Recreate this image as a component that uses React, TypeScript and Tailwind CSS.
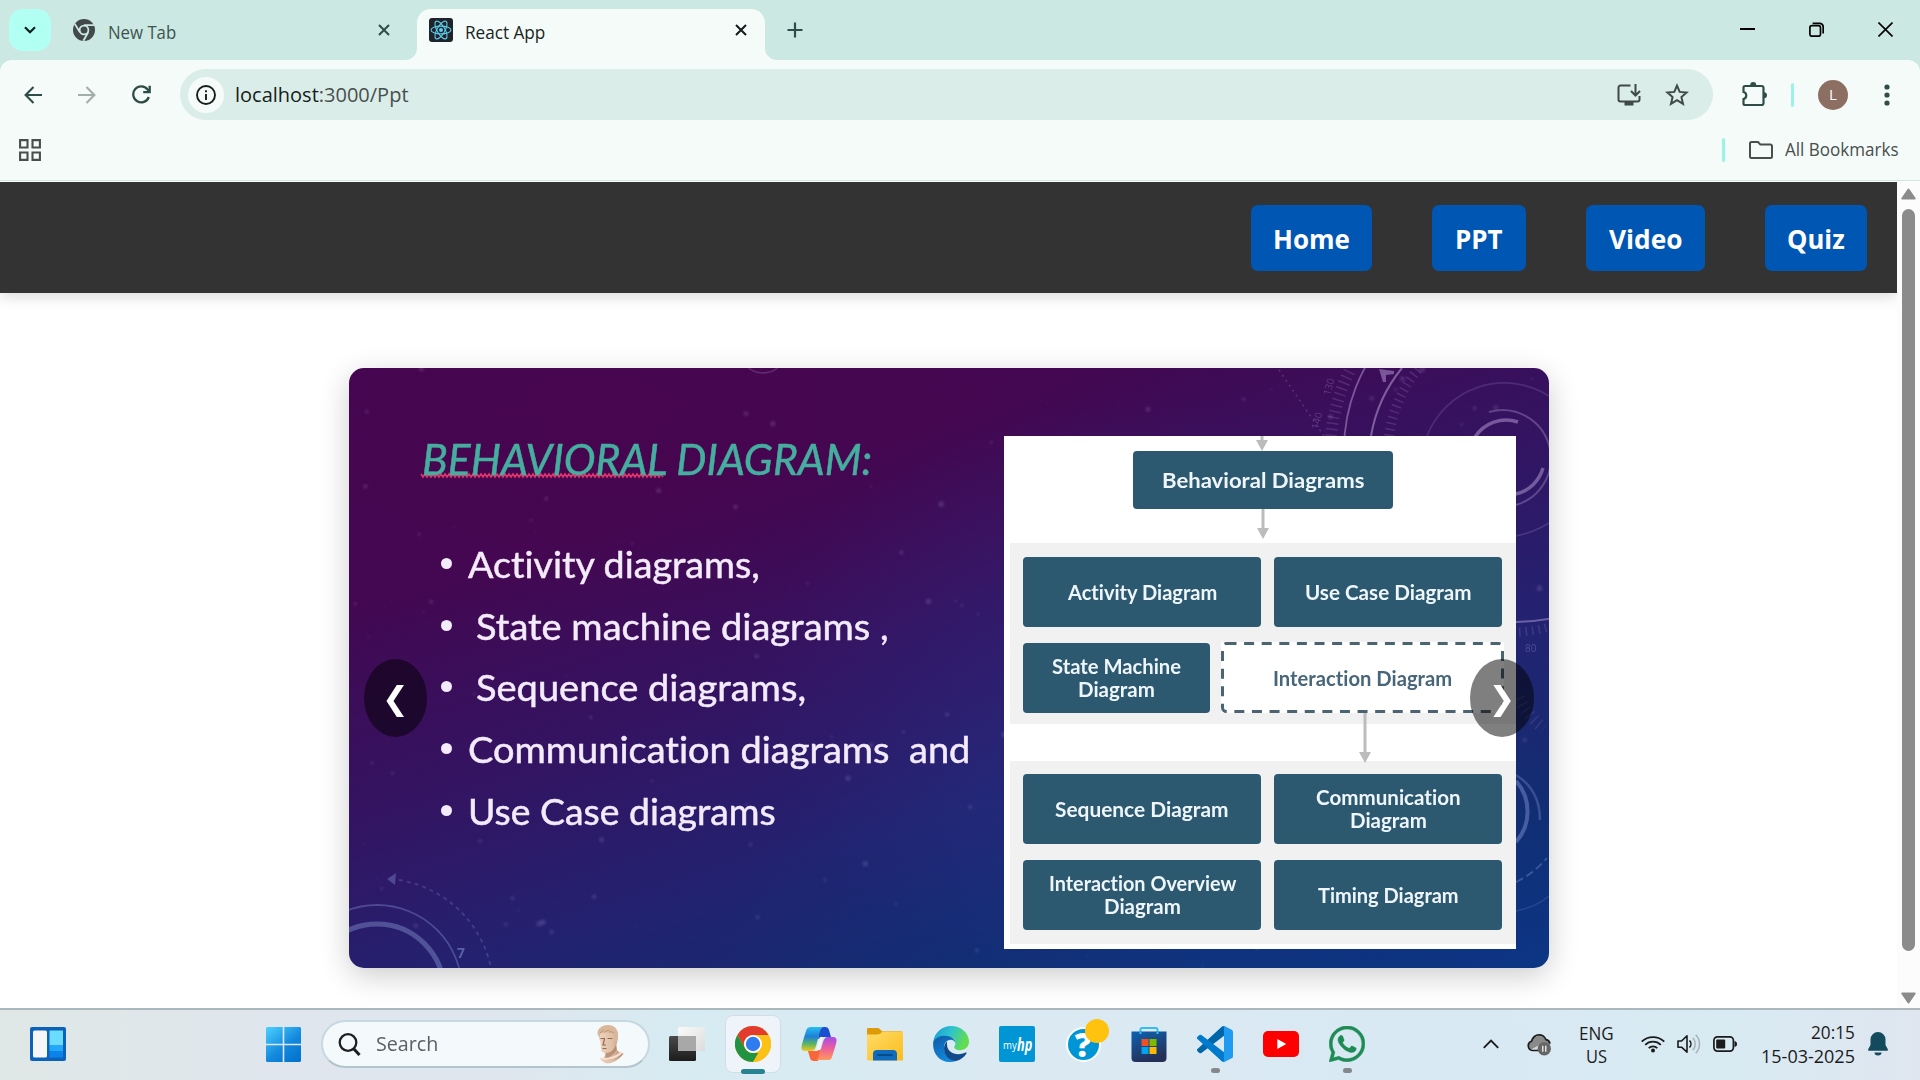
import { useLayoutEffect, useRef, useState } from "react";
import type { ReactNode } from "react";

/** Text condensed or widened to a fixed measure. */
function Fit({ w, className = "", children }: { w: number; className?: string; children: ReactNode }) {
  const ref = useRef<HTMLSpanElement>(null);
  const [scale, setScale] = useState(1);
  useLayoutEffect(() => {
    if (ref.current) setScale(w / ref.current.offsetWidth);
  }, [w]);
  return (
    <span className={`block shrink-0 whitespace-pre leading-none [font-variant-ligatures:none] ${className}`} style={{ width: w }}>
      <span ref={ref} className="inline-block origin-left" style={{ transform: `scaleX(${scale})` }}>
        {children}
      </span>
    </span>
  );
}

const CloseIcon = ({ className }: { className: string }) => (
  <svg className={className} viewBox="0 0 12 12" fill="none" stroke="currentColor" strokeWidth="2">
    <path d="M1 1l10 10M11 1L1 11" />
  </svg>
);

function TabStrip() {
  return (
    <div className="flex h-[60px] bg-[#cce8e2]">
      <div className="ml-[9px] mt-[9px] flex h-[42px] w-[42px] items-center justify-center rounded-[14px] bg-[#b2fff3]">
        <svg className="h-2 w-3" viewBox="0 0 12 8" fill="none" stroke="#0d1f1c" strokeWidth="2.2">
          <path d="M1 1.2l5 5 5-5" />
        </svg>
      </div>
      <div className="ml-[22px] flex w-[318px] items-center">
        <svg className="h-[22px] w-[22px] shrink-0" viewBox="0 0 22 22">
          <circle cx="11" cy="11" r="11" fill="#41494a" />
          <circle cx="11" cy="11" r="4.4" fill="none" stroke="#cce8e2" strokeWidth="1.8" />
          <path d="M11 6.2h10M6.9 13.2L1.8 4.9M15.2 13.2l-4.8 8.6" stroke="#cce8e2" strokeWidth="1.8" />
        </svg>
        <Fit w={68} className="ml-[13px] pt-[3px] font-['Open_Sans'] text-[18px] text-[#3c5450]">New Tab</Fit>
        <CloseIcon className="ml-[202px] h-3 w-3 shrink-0 text-[#2f4d48]" />
      </div>
      <div className="relative ml-[26px] mt-[9px] flex h-[51px] w-[348px] items-center rounded-t-[14px] bg-[#f5fbf9] pb-[9px]">
        <svg className="absolute -left-3 bottom-0 h-3 w-3" viewBox="0 0 12 12"><path d="M12 0v12H0A12 12 0 0 0 12 0" fill="#f5fbf9" /></svg>
        <svg className="absolute -right-3 bottom-0 h-3 w-3" viewBox="0 0 12 12"><path d="M0 0v12h12A12 12 0 0 1 0 0" fill="#f5fbf9" /></svg>
        <svg className="ml-3 h-6 w-6 shrink-0" viewBox="0 0 24 24" fill="none" stroke="#5ccfee" strokeWidth="1.1">
          <rect width="24" height="24" rx="3" fill="#20232a" stroke="none" />
          <ellipse cx="12" cy="12" rx="10" ry="3.9" />
          <ellipse cx="12" cy="12" rx="10" ry="3.9" transform="rotate(60 12 12)" />
          <ellipse cx="12" cy="12" rx="10" ry="3.9" transform="rotate(120 12 12)" />
          <circle cx="12" cy="12" r="2" fill="#5ccfee" stroke="none" />
        </svg>
        <Fit w={80} className="ml-3 pt-[3px] font-['Open_Sans'] text-[18px] text-[#182623]">React App</Fit>
        <CloseIcon className="ml-[190px] h-3 w-3 shrink-0 text-[#111c1a]" />
      </div>
      <svg className="ml-[22px] mt-[22px] h-4 w-4" viewBox="0 0 16 16" stroke="#2f4d48" strokeWidth="2.2">
        <path d="M8 .5v15M.5 8h15" />
      </svg>
      <div className="ml-auto mr-[27px] flex h-[59px] items-center gap-[54px]">
        <svg className="h-[15px] w-[15px]" viewBox="0 0 15 15"><path d="M0 7h15" stroke="#000" strokeWidth="2" /></svg>
        <svg className="h-[15px] w-[15px]" viewBox="0 0 15 15" fill="none" stroke="#000" strokeWidth="1.7">
          <rect x=".9" y="3.6" width="10.6" height="10.6" rx="2" />
          <path d="M3.6 1.3h7A3.6 3.6 0 0 1 14.2 5v6.6" />
        </svg>
        <svg className="h-[15px] w-[15px]" viewBox="0 0 15 15"><path d="M.5.5l14 14M14.500.5L.5 14.500" stroke="#000" strokeWidth="1.6" /></svg>
      </div>
    </div>
  );
}

function Toolbar() {
  return (
    <div className="bg-[#cce8e2]">
      <div className="h-[121px] rounded-t-xl border-b border-[#d3e4df] bg-[#f5fbf9]">
        <div className="flex h-[69px] items-center">
          <svg className="ml-6 h-[18px] w-[18px]" viewBox="0 0 18 18" fill="none" stroke="#2f4d48" strokeWidth="2.1"><path d="M9.500 1L1.600 9l7.900 8M1.600 9H18" /></svg>
          <svg className="ml-9 h-[18px] w-[18px]" viewBox="0 0 18 18" fill="none" stroke="#a3aeab" strokeWidth="2.1"><path d="M8.500 1l7.900 8-7.900 8M16.400 9H0" /></svg>
          <svg className="ml-9 h-[19px] w-[19px]" viewBox="0 0 19 19" fill="none" stroke="#2f4d48" strokeWidth="2.3">
            <path d="M16.800 12A8 8 0 1 1 15.600 4.500L17 6.300" /><path d="M17.700.8v6.400h-6.500" />
          </svg>
          <div className="ml-[29px] flex h-[51px] w-[1533px] items-center rounded-full bg-[#dbede8]">
            <div className="ml-2 flex h-9 w-9 items-center justify-center rounded-full bg-[#f5fbf9]">
              <svg className="h-5 w-5" viewBox="0 0 20 20" fill="none" stroke="#171d1b" strokeWidth="1.9">
                <circle cx="10" cy="10" r="9" /><path d="M10 9v6M10 5.200v2" />
              </svg>
            </div>
            <Fit w={174} className="ml-[11px] font-['Open_Sans'] text-[20px] text-[#474f4d]">
              <span className="text-[#171d1b]">localhost</span>:3000/Ppt
            </Fit>
            <svg className="ml-auto h-6 w-6" viewBox="0 0 24 24" fill="none" stroke="#3f4947" strokeWidth="2">
              <path d="M13.500 2.500H3.500a2 2 0 0 0-2 2v12a2 2 0 0 0 2 2h17a2 2 0 0 0 2-2V13" />
              <path d="M18.500 1v11M14 8l4.500 4.500L23 8" />
              <path d="M7.500 19h9v3.500h-9z" fill="#3f4947" stroke="none" />
            </svg>
            <svg className="ml-6 mr-[24px] h-6 w-6" viewBox="0 0 24 24" fill="none" stroke="#3f4947" strokeWidth="2">
              <path d="M12 2.600l2.700 6.300 6.900.6-5.200 4.500 1.600 6.900-6-3.700-6 3.700 1.600-6.900L2.400 9.500l6.900-.6z" />
            </svg>
          </div>
          <svg className="ml-[28px] h-[26px] w-[26px]" viewBox="0 0 26 26" fill="none" stroke="#2f4d48" strokeWidth="2.200">
            <path d="M4 4h16.500a2 2 0 0 1 2 2v15a2 2 0 0 1-2 2H4a1.500 1.500 0 0 1-1.500-1.500V17a3.600 3.600 0 0 0 0-7V5.500A1.500 1.500 0 0 1 4 4z" />
            <path d="M9.200 3a3 3 0 0 1 6 0zM23 10.200a3 3 0 0 1 0 6z" fill="#2f4d48" stroke="none" />
          </svg>
          <div className="ml-[24px] h-6 w-[3px] rounded bg-[#9bf3e5]" />
          <div className="ml-[24px] flex h-[30px] w-[30px] items-center justify-center rounded-full bg-[#8d6e63] font-['Open_Sans'] text-[15px] leading-none text-white">L</div>
          <svg className="ml-[36px] h-[22px] w-[6px]" viewBox="0 0 6 22" fill="#2f4d48">
            <circle cx="3" cy="3" r="2.600" /><circle cx="3" cy="11" r="2.600" /><circle cx="3" cy="19" r="2.600" />
          </svg>
        </div>
        <div className="mt-[9px] flex h-6 items-center">
          <svg className="ml-[19px] h-[22px] w-[22px]" viewBox="0 0 22 22" fill="none" stroke="#474f4d" strokeWidth="2.100">
            <path d="M1.100 1.100h7.400v7.400H1.100zM13.500 1.100h7.400v7.400h-7.400zM1.100 13.500h7.400v7.400H1.100zM13.500 13.500h7.400v7.400h-7.400z" />
          </svg>
          <div className="ml-auto h-6 w-[3px] rounded bg-[#9bf3e5]" />
          <svg className="ml-[24px] h-[18px] w-6" viewBox="0 0 24 18" fill="none" stroke="#474f4d" strokeWidth="2">
            <path d="M1 2.500A1.500 1.500 0 0 1 2.500 1H9l2.400 2.600h10A1.500 1.500 0 0 1 23 5v10.500a1.500 1.500 0 0 1-1.500 1.500h-19A1.500 1.500 0 0 1 1 15.500z" />
          </svg>
          <Fit w={114} className="ml-3 mr-[21px] font-['Open_Sans'] text-[17.500px] text-[#474f4d]">All Bookmarks</Fit>
        </div>
      </div>
    </div>
  );
}

const NAV = [
  { label: "Home", w: 77, box: "w-[121px]" },
  { label: "PPT", w: 48, box: "w-[94px]" },
  { label: "Video", w: 74, box: "w-[119px]" },
  { label: "Quiz", w: 58, box: "w-[102px]" },
];

const STARS = Array.from({ length: 150 }, (_, i) => {
  const a = Math.sin(i * 127.1 + 3.7) * 43758.5453;
  const b = Math.sin(i * 311.7 + 1.3) * 24634.6345;
  const c = Math.sin(i * 71.9 + 9.1) * 9631.17;
  return { x: (a - Math.floor(a)) * 1200, y: (b - Math.floor(b)) * 600, t: c - Math.floor(c) };
});

function SlideBackdrop() {
  return (
    <svg className="absolute inset-0 h-[600px] w-[1200px]" viewBox="0 0 1200 600" fill="none">
      <g fill="#b9a3e6" className="blur-[0.8px]">
        {STARS.map((s, i) => (
          <circle key={i} cx={s.x} cy={s.y} r={1 + s.t * 2} opacity={0.06 + s.t * 0.13} />
        ))}
      </g>
      <g stroke="#b79fd6" className="blur-[0.4px]">
        <circle cx="414" cy="-18" r="23" opacity=".25" strokeWidth="1.500" />
        <circle cx="1167" cy="82" r="172" opacity=".5" strokeWidth="1.800" />
        <path d="M1022 68A146 146 0 0 1 1053 0" opacity=".55" strokeWidth="2" />
        <path d="M1040 68A130 130 0 0 1 1070 0" opacity=".2" strokeWidth="10" strokeDasharray="1.500 4.500" />
        <path d="M982 68A186 186 0 0 1 1002 0" opacity=".2" strokeWidth="12" strokeDasharray="1.500 4.500" />
        <path d="M930 2l45 66" opacity=".25" strokeWidth="1.500" strokeDasharray="2 4" />
        <path d="M1078 68A83 83 0 0 1 1200 28" opacity=".18" strokeWidth="1.800" />
        <path d="M1140 44A48 48 0 0 1 1167 137" opacity=".35" strokeWidth="2" />
        <path d="M1126 69A37 37 0 0 1 1169 54" opacity=".5" strokeWidth="3.500" />
        <path d="M1194 100A37 37 0 0 1 1167 126" opacity=".5" strokeWidth="3.500" />
        <path d="M1167 168Q1186 164 1200 155" opacity=".2" strokeWidth="1.500" />
        <path d="M1170 264Q1186 263 1200 259" opacity=".18" strokeWidth="9" strokeDasharray="1.500 5" />
        <path d="M1170 330Q1180 350 1195 360" opacity=".15" strokeWidth="12" strokeDasharray="1.500 5" />
      </g>
      <path d="M1030 1l15 2v3l-8 1 0 7-3 0z" fill="#b79fd6" opacity=".5" />
      <g fill="#b79fd6" opacity=".3" className="font-['Open_Sans'] text-[10px]">
        <text transform="translate(981 28) rotate(-75)">130</text>
        <text transform="translate(969 62) rotate(-75)">140</text>
        <text x="1176" y="284">80</text>
      </g>
      <g stroke="#8fa0dd" className="blur-[0.4px]">
        <path d="M1167 413A46 46 0 0 1 1167 474" opacity=".42" strokeWidth="4" />
        <path d="M1167 407Q1191 422 1191 452" opacity=".3" strokeWidth="2.500" />
        <path d="M1167 514Q1184 506 1198 490" opacity=".35" strokeWidth="1.800" strokeDasharray="8 4" />
        <path d="M1167 543Q1187 539 1200 528" opacity=".2" strokeWidth="1.500" />
        <circle cx="28" cy="623" r="67" opacity=".4" strokeWidth="5" />
        <circle cx="28" cy="622" r="85" opacity=".35" strokeWidth="1.800" />
        <path d="M50 512A112 112 0 0 1 142 600" opacity=".25" strokeWidth="1.800" strokeDasharray="4 4" />
      </g>
      <path d="M38 511l9-6-1 12z" fill="#8fa0dd" opacity=".35" />
      <text x="108" y="590" fill="#8fa0dd" opacity=".5" className="font-['Open_Sans'] text-[14px] font-bold">7</text>
      <path
        d={"M72 106" + Array.from({ length: 121 }, (_, i) => (i % 2 ? "l2 -3" : "l2 3")).join("")}
        stroke="#e0356c" strokeWidth="1.600"
      />
    </svg>
  );
}

const BULLETS = [
  { text: "Activity diagrams,", w: 292, inset: false },
  { text: "State machine diagrams ,", w: 413, inset: true },
  { text: "Sequence diagrams,", w: 330, inset: true },
  { text: "Communication diagrams  and", w: 502, inset: false },
  { text: "Use Case diagrams", w: 308, inset: false },
];

function Box({ lines, className = "" }: { lines: [string, number][]; className?: string }) {
  return (
    <div className={`flex flex-col items-center justify-center gap-[2px] rounded-[4px] bg-[#2c5970] pb-[2px] font-['Lato'] text-[21px] font-bold text-[#eff6fa] ${className}`}>
      {lines.map(([t, w]) => <Fit key={t} w={w}>{t}</Fit>)}
    </div>
  );
}

function Arrow({ h }: { h: number }) {
  return (
    <svg className="block w-3" style={{ height: h }} viewBox={`0 0 12 ${h}`} fill="#bcbcbc">
      <path d={`M4.500 0h3v${h - 11}H12L6 ${h}L0 ${h - 11}h4.500z`} />
    </svg>
  );
}

function Diagram() {
  return (
    <div className="mt-[68px] flex h-[513px] w-[512px] flex-col bg-white">
      <div className="ml-[252px]"><Arrow h={15} /></div>
      <Box className="ml-[129px] h-[58px] w-[260px]" lines={[["Behavioral Diagrams", 202]]} />
      <div className="ml-[253px]"><Arrow h={30} /></div>
      <div className="ml-[6px] mt-[4px] h-[181px] bg-[#f1f1f1] pl-[13px] pt-[14px]">
        <div className="flex gap-[13px]">
          <Box className="h-[70px] w-[238px]" lines={[["Activity Diagram", 149]]} />
          <Box className="h-[70px] w-[228px]" lines={[["Use Case Diagram", 167]]} />
        </div>
        <div className="mt-4 flex gap-[11px]">
          <Box className="h-[70px] w-[187px]" lines={[["State Machine", 129], ["Diagram", 77]]} />
          <div className="relative -mt-px flex h-[71px] w-[283px] items-center justify-center bg-white pb-px font-['Lato'] text-[21px] font-bold text-[#47667a]">
            <svg className="absolute inset-0 h-full w-full" viewBox="0 0 283 71" fill="none">
              <rect x="1.500" y="1.500" width="280" height="68" rx="4" stroke="#4a6472" strokeWidth="3" strokeDasharray="10 7.600" />
            </svg>
            <Fit w={179}>Interaction Diagram</Fit>
          </div>
        </div>
      </div>
      <div className="relative h-[37px]">
        <div className="absolute -top-[11px] left-[355px]"><Arrow h={50} /></div>
      </div>
      <div className="ml-[6px] h-[183px] bg-[#f1f1f1] pl-[13px] pt-[13px]">
        <div className="flex gap-[13px]">
          <Box className="h-[70px] w-[238px]" lines={[["Sequence Diagram", 174]]} />
          <Box className="h-[70px] w-[228px]" lines={[["Communication", 145], ["Diagram", 77]]} />
        </div>
        <div className="mt-4 flex gap-[13px]">
          <Box className="h-[70px] w-[238px]" lines={[["Interaction Overview", 187], ["Diagram", 77]]} />
          <Box className="h-[70px] w-[228px]" lines={[["Timing Diagram", 141]]} />
        </div>
      </div>
    </div>
  );
}

function Slide() {
  return (
    <div className="relative flex h-[600px] w-[1200px] overflow-hidden rounded-[15px] bg-[radial-gradient(ellipse_420px_300px_at_68%_55%,#31308a66,transparent),radial-gradient(ellipse_500px_300px_at_72%_100%,#0b3a8a66,transparent),radial-gradient(ellipse_600px_240px_at_22%_8%,#4a044c88,transparent),linear-gradient(162deg,#450652_0%,#430852_24%,#331462_46%,#232270_64%,#122c70_82%,#0c3584_100%)]">
      <SlideBackdrop />
      <div className="relative w-[655px] shrink-0">
        <Fit w={450} className="ml-[73px] mt-[70px] font-['Lato'] text-[42px] italic text-[#46ae9f] [-webkit-text-stroke:0.5px_#46ae9f]">BEHAVIORAL DIAGRAM:</Fit>
        <ul className="mt-[53px]">
          {BULLETS.map((b) => (
            <li key={b.text} className="flex h-[61.600px] items-center">
              <span className="ml-[92px] h-[11px] w-[11px] shrink-0 rounded-full bg-[#f3eafa]" />
              <Fit w={b.w} className={`font-['Lato'] text-[37px] text-[#f3eafa] [-webkit-text-stroke:0.5px_#f3eafa] ${b.inset ? "ml-[24px]" : "ml-[16px]"}`}>{b.text}</Fit>
            </li>
          ))}
        </ul>
      </div>
      <div className="relative"><Diagram /></div>
      <button className="absolute left-[15px] top-[291px] flex h-[78px] w-[63px] items-center justify-center rounded-[50%] bg-black/50 font-['DejaVu_Sans'] text-[32px] leading-none text-white">❮</button>
      <button className="absolute left-[1121px] top-[291px] flex h-[78px] w-[64px] items-center justify-center rounded-[50%] bg-black/50 font-['DejaVu_Sans'] text-[32px] leading-none text-white">❯</button>
    </div>
  );
}

function Page() {
  return (
    <div className="mt-px flex h-[826px] bg-white">
      <div className="h-full w-[1897px] overflow-hidden">
        <nav className="flex h-[111px] items-center justify-end gap-[60px] bg-[#333] pr-[30px] shadow-[0_4px_14px_rgba(0,0,0,0.14)]">
          {NAV.map((n) => (
            <a key={n.label} className={`flex h-[66px] items-center justify-center rounded-[7px] bg-[#0056b3] pt-px font-['Open_Sans'] text-[27px] font-bold text-white ${n.box}`}>
              <Fit w={n.w}>{n.label}</Fit>
            </a>
          ))}
        </nav>
        <div className="ml-[349px] mt-[75px] h-[600px] w-[1200px] rounded-[15px] shadow-[0_8px_30px_rgba(0,0,0,0.2)]">
          <Slide />
        </div>
      </div>
      <div className="flex w-[23px] flex-col items-center bg-[#fcfcfc]">
        <svg className="mt-[6px] h-3 w-[15px]" viewBox="0 0 15 12"><path d="M7.500 1.500L13.700 10.500H1.300z" fill="#8b8b8b" stroke="#8b8b8b" strokeWidth="2" strokeLinejoin="round" /></svg>
        <div className="mt-[9px] h-[742px] w-[13px] rounded-full bg-[#8b8b8b]" />
        <svg className="mt-[41px] h-3 w-[15px]" viewBox="0 0 15 12"><path d="M7.500 10.500L13.700 1.500H1.300z" fill="#8b8b8b" stroke="#8b8b8b" strokeWidth="2" strokeLinejoin="round" /></svg>
      </div>
    </div>
  );
}

function ChromeLogo() {
  return (
    <svg className="h-9 w-9" viewBox="0 0 36 36">
      <circle cx="18" cy="18" r="18" fill="#fbc116" />
      <path d="M18 0A18 18 0 0 1 33.600 9H18a9 9 0 0 0-7.800 13.500L2.400 9A18 18 0 0 1 18 0z" fill="#e33b2e" />
      <path d="M2.400 9l7.800 13.500A9 9 0 0 0 18 27h7.800L18 36A18 18 0 0 1 2.400 9z" fill="#229342" />
      <path d="M18 36l7.800-13.500A9 9 0 0 0 25.800 13.500L24 9h9.600A18 18 0 0 1 18 36z" fill="#fbc116" />
      <circle cx="18" cy="18" r="9" fill="#fff" />
      <circle cx="18" cy="18" r="7.200" fill="#2f7bf0" />
    </svg>
  );
}

function CopilotLogo() {
  return (
    <svg className="h-9 w-9" viewBox="0 0 36 36">
      <defs>
        <linearGradient id="cpA" x1="0" y1="0" x2="0" y2="1"><stop offset="0" stopColor="#28bdf0" /><stop offset=".4" stopColor="#1d80d8" /><stop offset=".7" stopColor="#5cb467" /><stop offset="1" stopColor="#f2c91c" /></linearGradient>
        <linearGradient id="cpB" x1="0" y1="0" x2="0" y2="1"><stop offset="0" stopColor="#a64be8" /><stop offset=".5" stopColor="#ec5f9a" /><stop offset="1" stopColor="#ff9a5a" /></linearGradient>
      </defs>
      <path d="M19 1h5a4 4 0 0 1 4 3l2 7h-8l-5 2z" fill="#1a4fcf" />
      <path d="M17 35h-4a4 4 0 0 1-4-3l-2-7h9l4-2z" fill="#f8663a" />
      <path d="M10 1h13c-2 0-3 2-4 4l-4 15c-1 3-2 5-5 5H4c-4 0-4-3-3-7l4-13c1-3 2-4 5-4z" fill="url(#cpA)" />
      <path d="M27 11h5c4 0 4 3 3 7l-4 13c-1 3-2 3-5 3H14c2 0 3-1 4-4l4-14c1-3 2-5 5-5z" fill="url(#cpB)" />
      <path d="M19 11h3l-3 13h-4z" fill="#eef6fa" />
    </svg>
  );
}

function FolderLogo() {
  return (
    <svg className="h-9 w-9" viewBox="0 0 36 36">
      <defs><linearGradient id="fo" x1="0" y1="0" x2="1" y2="1"><stop offset="0" stopColor="#ffdc68" /><stop offset="1" stopColor="#fbbc1c" /></linearGradient></defs>
      <path d="M0 3a1 1 0 0 1 1-1h9.500c1 0 1.500.3 2.200 1L15 5.200h19a1 1 0 0 1 1 1V10H0z" fill="#dd9a09" />
      <path d="M0 8.500h10c2 0 3-.5 4.300-1.700L16 5.500h19a1 1 0 0 1 1 1V33.500a1 1 0 0 1-1 1H1a1 1 0 0 1-1-1z" fill="url(#fo)" />
      <path d="M6 34.500V28a4 4 0 0 1 4-4h16a4 4 0 0 1 4 4v6.500z" fill="#0f6cbd" />
      <path d="M11 29h14" stroke="#0a4a8a" strokeWidth="1.800" strokeLinecap="round" />
    </svg>
  );
}

function EdgeLogo() {
  return (
    <svg className="h-9 w-9" viewBox="0 0 36 36">
      <defs>
        <linearGradient id="edA" x1="0" y1="0" x2="1" y2=".35"><stop offset="0" stopColor="#1b96d6" /><stop offset=".5" stopColor="#2cc3cf" /><stop offset="1" stopColor="#62dd50" /></linearGradient>
        <linearGradient id="edB" x1="0" y1="0" x2=".5" y2="1"><stop offset="0" stopColor="#0c5aa6" /><stop offset="1" stopColor="#1489dc" /></linearGradient>
      </defs>
      <path d="M.3 15.500C1.500 6.500 9 0 18 0c10.500 0 18 7.500 18 15.500 0 5.500-4.300 8.700-8.800 8.700-4 0-6-1.500-6-2.900 0-1 1.300-1.700 1.300-4.200 0-3.600-3.600-6.800-9-6.800C8 10.300 3 12 .3 15.500z" fill="url(#edA)" />
      <path d="M.3 15.500C3 11 8 9.800 12 9.800c6 0 10.500 3.600 10.500 7.500-.5-1.800-2.500-3.500-4.700-3.500-4.500 0-6.800 4-6.800 8 0 6 5 12.800 12 13.200C14 38 4 34.500.9 24 .1 21.300 0 18.500.3 15.500z" fill="url(#edB)" />
      <path d="M14 15.500c-1.600 1.600-3 4-3 7C11 29 16 35 23 35c4.500-1 8-3.700 10.500-7.500.4-.8-.2-1.300-1-.9-8.500 4-18.500.5-18.500-8 0-1 0-2 0-3.100z" fill="#114a8b" />
    </svg>
  );
}

function StoreLogo() {
  return (
    <svg className="h-9 w-9" viewBox="0 0 36 36">
      <defs><linearGradient id="st" x1="0" y1="0" x2=".4" y2="1"><stop offset="0" stopColor="#0e62b3" /><stop offset="1" stopColor="#243057" /></linearGradient></defs>
      <path d="M9.500 8V3.500A1.500 1.500 0 0 1 11 2h14a1.500 1.500 0 0 1 1.500 1.500V8" fill="none" stroke="#35bdf2" strokeWidth="2" />
      <path d="M.5 5.500h35V32a4 4 0 0 1-4 4h-27a4 4 0 0 1-4-4z" fill="url(#st)" />
      <path d="M9.500 5.500V8M26.500 5.500V8" stroke="#35bdf2" strokeWidth="2" />
      <path d="M10.500 13h7v7h-7z" fill="#f25022" /><path d="M18.500 13h7v7h-7z" fill="#7fba00" />
      <path d="M10.500 21h7v7h-7z" fill="#00a4ef" /><path d="M18.500 21h7v7h-7z" fill="#ffb900" />
    </svg>
  );
}

function VsCodeLogo() {
  return (
    <svg className="h-9 w-9" viewBox="0 0 100 100">
      <path d="M96.500 10.800L75.900.9a6.200 6.200 0 0 0-7.100 1.200L1.300 63.600a4.200 4.200 0 0 0 0 6.200l5.500 5a4.200 4.200 0 0 0 5.400.2L93.500 13.400c2.700-2.100 6.600-.1 6.600 3.300v-.3a6.300 6.300 0 0 0-3.600-5.600z" fill="#0065a9" />
      <path d="M96.500 89.200l-20.600 9.900a6.200 6.200 0 0 1-7.100-1.200L1.300 36.400a4.200 4.200 0 0 1 0-6.200l5.500-5a4.200 4.200 0 0 1 5.400-.2l81.300 61.600c2.700 2.100 6.600.1 6.600-3.300v.3a6.300 6.300 0 0 1-3.600 5.600z" fill="#007acc" />
      <path d="M75.900 99.100a6.200 6.200 0 0 1-7.100-1.200c2.300 2.300 6.200.7 6.200-2.600V4.700c0-3.300-3.900-4.900-6.200-2.600A6.200 6.200 0 0 1 75.900.9l20.600 9.900a6.300 6.300 0 0 1 3.500 5.600v67.200a6.300 6.300 0 0 1-3.500 5.600z" fill="#1f9cf0" />
    </svg>
  );
}

function WhatsAppLogo() {
  return (
    <svg className="h-9 w-9" viewBox="0 0 24 24" fill="#1c8b54" stroke="#1c8b54" strokeWidth=".35">
      <path d="M.06 24l1.690-6.160a11.870 11.870 0 0 1-1.590-5.950C.16 5.340 5.500 0 12.050 0a11.820 11.820 0 0 1 8.410 3.490 11.820 11.820 0 0 1 3.480 8.410c0 6.560-5.340 11.890-11.890 11.890a11.900 11.900 0 0 1-5.690-1.450L.06 24zm6.600-3.810c1.680 1 3.280 1.590 5.390 1.590 5.450 0 9.890-4.430 9.890-9.880A9.860 9.860 0 0 0 12.060 2C6.600 2 2.170 6.430 2.170 11.880c0 2.220.65 3.890 1.750 5.630l-1 3.650z" />
      <path d="M17.470 14.380c-.3-.15-1.760-.87-2.030-.97-.27-.1-.47-.15-.67.15-.2.300-.770.970-.940 1.160-.170.200-.350.220-.640.080-.300-.150-1.260-.460-2.390-1.480-.880-.790-1.480-1.760-1.650-2.060-.170-.300-.020-.460.130-.610.130-.130.300-.350.450-.520.150-.170.200-.300.300-.500.100-.200.050-.370-.030-.520-.070-.150-.670-1.610-.910-2.210-.240-.580-.490-.500-.670-.510h-.570c-.200 0-.520.070-.790.370-.270.300-1.040 1.020-1.040 2.480s1.070 2.880 1.210 3.070c.150.200 2.100 3.200 5.080 4.490.710.310 1.260.490 1.690.630.710.230 1.360.190 1.870.120.570-.090 1.760-.720 2.010-1.410.250-.690.250-1.290.170-1.410-.070-.120-.270-.200-.570-.350z" />
    </svg>
  );
}

function Bust() {
  return (
    <svg className="h-[39px] w-[28px]" viewBox="0 0 28 39">
      <defs><linearGradient id="bu" x1="0" y1="0" x2="1" y2="0"><stop offset="0" stopColor="#ecd3bf" /><stop offset=".55" stopColor="#dfbfa6" /><stop offset="1" stopColor="#b58a6c" /></linearGradient></defs>
      <path d="M3 9C3 3 7 .5 12 .5S22 4 22 10c0 4-1 8-1.500 10l.5 5c1 2 4 3 6.500 3.500C24 34 17 38.500 11 38.500c-3-1-6-2.500-7-5 3-.5 4.500-1.500 5-3l-.5-3c-2 0-3.500-1-3.500-4L4.500 17C3 15 3 12 3 9z" fill="url(#bu)" />
      <path d="M1.500 9C1 3 7 0 12 0c6 0 10 4 10 10 0 2-.5 5-1 7l-2-1-1-6C14 6.500 8 6.500 4 9l-.5 4z" fill="#d9b79b" />
      <path d="M4 8c2-2 3-2 4-3M8 7.500c2-1 3-2 5-2.500M13 7c2-.5 3-.5 5 1" stroke="#b98f70" strokeWidth=".9" fill="none" />
      <path d="M4.500 13.500h4.500M11.500 13.500h5M6.500 23.500h4M8.500 14l-1.500 6h3" stroke="#96694c" strokeWidth="1.200" fill="none" />
      <path d="M10 28c4 0 8-3 10-8l.5 5c-3 5-7 8-12 9z" fill="#a87b5c" opacity=".65" />
      <path d="M4 33c7 2 16 0 22-6" stroke="#f6e4d8" strokeWidth="1.800" fill="none" />
    </svg>
  );
}

function Tray() {
  return (
    <div className="ml-auto flex h-full items-center">
      <svg className="h-[10px] w-4" viewBox="0 0 16 10" fill="none" stroke="#1b1b1b" strokeWidth="1.900"><path d="M.8 8.800L8 1.600l7.200 7.200" /></svg>
      <svg className="ml-7 mt-[2px] h-[22px] w-6" viewBox="0 0 24 22">
        <path d="M5.500 16.500A5 5 0 0 1 4.500 7 8 8 0 0 1 18.500 5.500a5.500 5.500 0 0 1 4 8v3z" fill="#8a8a8a" />
        <path d="M4 15.500L18 8l5 3-1 6H6z" fill="#d8d8d8" />
        <path d="M12 16.500H5.500A4.800 4.800 0 0 1 4.500 7.200C6 2.800 9 .9 12 .9c3 0 5.500 1.600 7 4.700a5 5 0 0 1 4 4" fill="none" stroke="#1b1b1b" strokeWidth="1.700" />
        <circle cx="17.300" cy="14.800" r="6.700" fill="#666" />
        <path d="M15.800 11.800v6M18.800 11.800v6" stroke="#fff" strokeWidth="1.200" />
      </svg>
      <div className="ml-[27px] flex w-[36px] flex-col items-center gap-[5px] font-['Open_Sans'] text-[18px] text-[#1b1b1b]">
        <Fit w={35}>ENG</Fit>
        <Fit w={21}>US</Fit>
      </div>
      <svg className="ml-[27px] h-[18px] w-6" viewBox="0 0 24 18" fill="none" stroke="#1b1b1b" strokeWidth="1.700">
        <path d="M.7 6.700a16 16 0 0 1 22.600 0M4.200 9.900a11 11 0 0 1 15.600 0M7.700 13.100a6 6 0 0 1 8.600 0" />
        <circle cx="12" cy="15.500" r="2" fill="#1b1b1b" stroke="none" />
      </svg>
      <svg className="ml-3 h-5 w-6" viewBox="0 0 24 20" fill="none" stroke="#1b1b1b" strokeWidth="1.600">
        <path d="M1 7h3.500L10 1.800v16.400L4.500 13.200H1z" strokeLinejoin="round" />
        <path d="M12.500 6.500a5 5 0 0 1 0 7" />
        <path d="M15.800 3.800a9 9 0 0 1 0 12.400M18.700.8a13 13 0 0 1 0 18.400" stroke="#aab5ba" />
      </svg>
      <svg className="ml-3 h-4 w-6" viewBox="0 0 24 16">
        <rect x=".9" y=".9" width="19.500" height="14.200" rx="3.500" fill="none" stroke="#1b1b1b" strokeWidth="1.700" />
        <rect x="3.200" y="3.500" width="9" height="9" rx="1" fill="#1b1b1b" /><path d="M21.500 5c2 .5 2.500 1.500 2.500 3s-.5 2.500-2.500 3z" fill="#1b1b1b" />
      </svg>
      <div className="ml-[24px] flex flex-col items-end gap-[6px] font-['Open_Sans'] text-[18px] text-[#1b1b1b]">
        <Fit w={44}>20:15</Fit>
        <Fit w={94}>15-03-2025</Fit>
      </div>
      <svg className="ml-[13px] mr-[32px] h-6 w-5" viewBox="0 0 20 24" fill="#134a5c">
        <path d="M10 0a7.500 7.500 0 0 1 7.500 7.500V13l2.300 4.300c.4.900 0 1.500-.8 1.500H1c-.8 0-1.200-.6-.8-1.500L2.500 13V7.500A7.500 7.500 0 0 1 10 0zM6.500 20.500h7a3.500 3 0 0 1-7 0z" />
      </svg>
    </div>
  );
}

function Taskbar() {
  return (
    <div className="flex h-[72px] items-center border-t-2 border-[#aab7bc] bg-[linear-gradient(90deg,#dfe8e6_0%,#dfe6ed_14%,#dfe6ed_26%,#d7ebf2_36%,#dbe9f2_55%,#d8e9f3_78%,#d8eaf2_90%,#dfe6f0_100%)] pb-[2px]">
      <svg className="ml-[30px] h-[34px] w-9 shrink-0" viewBox="0 0 36 34">
        <rect width="36" height="34" rx="2" fill="#0c62b8" />
        <rect x="3" y="3.500" width="14" height="27" rx="1.500" fill="#f6f6f8" />
        <path d="M19.500 3.500h13.500v15H19.500z" fill="#6adcff" /><path d="M19.500 18.500h13.500v6H19.500z" fill="#22a8fb" /><path d="M19.500 24.500h13.500v6H19.500z" fill="#0a84ea" />
      </svg>
      <svg className="ml-[200px] h-[35px] w-[35px] shrink-0" viewBox="0 0 35 35">
        <defs><linearGradient id="wi" x1="0" y1="0" x2=".8" y2="1"><stop offset="0" stopColor="#4cd2ff" /><stop offset=".6" stopColor="#1389dd" /><stop offset="1" stopColor="#0474d0" /></linearGradient></defs>
        <path d="M1 0h15.700v16.700H0V1zM18.300 0H34l1 1v15.700H18.300zM0 18.300h16.700V35H1l-1-1zM18.300 18.300H35V34l-1 1H18.300z" fill="url(#wi)" />
      </svg>
      <div className="ml-[20px] flex h-12 w-[329px] shrink-0 items-center rounded-full border-2 border-[#c6d8e0] border-b-[#b2c4cc] bg-[#f4f9fc]">
        <svg className="ml-[15px] h-[23px] w-[23px]" viewBox="0 0 23 23" fill="none" stroke="#1e1e1e" strokeWidth="2.300"><circle cx="10" cy="9.500" r="8.300" /><path d="M15.500 15.500l6 6.500" strokeWidth="3" /></svg>
        <Fit w={62} className="ml-[15px] font-['Open_Sans'] text-[20px] text-[#5a6064]">Search</Fit>
        <div className="ml-auto mr-[24px]"><Bust /></div>
      </div>
      <svg className="ml-[19px] h-9 w-9 shrink-0" viewBox="0 0 36 36">
        <defs>
          <linearGradient id="tv" x1="0" y1="0" x2="0" y2="1"><stop offset="0" stopColor="#4a4a4a" /><stop offset="1" stopColor="#1c1c1c" /></linearGradient>
          <linearGradient id="tw" x1="0" y1="0" x2="1" y2="1"><stop offset="0" stopColor="#fafafa" /><stop offset="1" stopColor="#dcdcdc" /></linearGradient>
        </defs>
        <rect y="10" width="27" height="25" rx="1.500" fill="url(#tv)" />
        <rect x="9" y="1" width="27" height="24" rx="1.500" fill="url(#tw)" /><path d="M9 10h18v15H9z" fill="#a8a8a8" />
      </svg>
      <div className="relative ml-[20px] flex h-[58px] w-[56px] shrink-0 items-center justify-center rounded-lg border border-[#d3dde6] bg-[#eef4fa]">
        <ChromeLogo />
        <div className="absolute -bottom-[2px] h-[5px] w-6 rounded-full bg-[#27838f]" />
      </div>
      <div className="ml-[20px] flex shrink-0 items-center gap-[30px]">
        <CopilotLogo />
        <FolderLogo />
        <EdgeLogo />
        <div className="flex h-9 w-9 items-center justify-center rounded-[2px] bg-[#0096d6] font-['Open_Sans'] leading-none text-white">
          <Fit w={14} className="text-[11px]">my</Fit>
          <Fit w={15} className="text-[17px] font-bold italic">hp</Fit>
        </div>
        <div className="relative flex h-9 w-9 items-center justify-center">
          <div className="flex h-[35px] w-[35px] shrink-0 items-center justify-center rounded-full border-2 border-white bg-[#0096d6] font-['Open_Sans'] text-[33px] font-extrabold leading-none text-white">?</div>
          <div className="absolute -right-[8px] -top-[7px] h-6 w-6 rounded-full bg-[#ffc20e]" />
        </div>
        <StoreLogo />
        <div className="relative flex justify-center">
          <VsCodeLogo />
          <div className="absolute -bottom-[11px] h-[5px] w-[9px] rounded-full bg-[#82888b]" />
        </div>
        <svg className="h-9 w-9" viewBox="0 0 36 36"><rect y="5" width="36" height="26" rx="5" fill="#f00" /><path d="M14.300 13l9 5-9 5z" fill="#fff" /></svg>
        <div className="relative flex justify-center">
          <WhatsAppLogo />
          <div className="absolute -bottom-[11px] h-[5px] w-[9px] rounded-full bg-[#82888b]" />
        </div>
      </div>
      <Tray />
    </div>
  );
}

export default function App() {
  return (
    <div className="flex h-[1080px] w-[1920px] flex-col overflow-hidden bg-white">
      <TabStrip />
      <Toolbar />
      <Page />
      <Taskbar />
    </div>
  );
}
